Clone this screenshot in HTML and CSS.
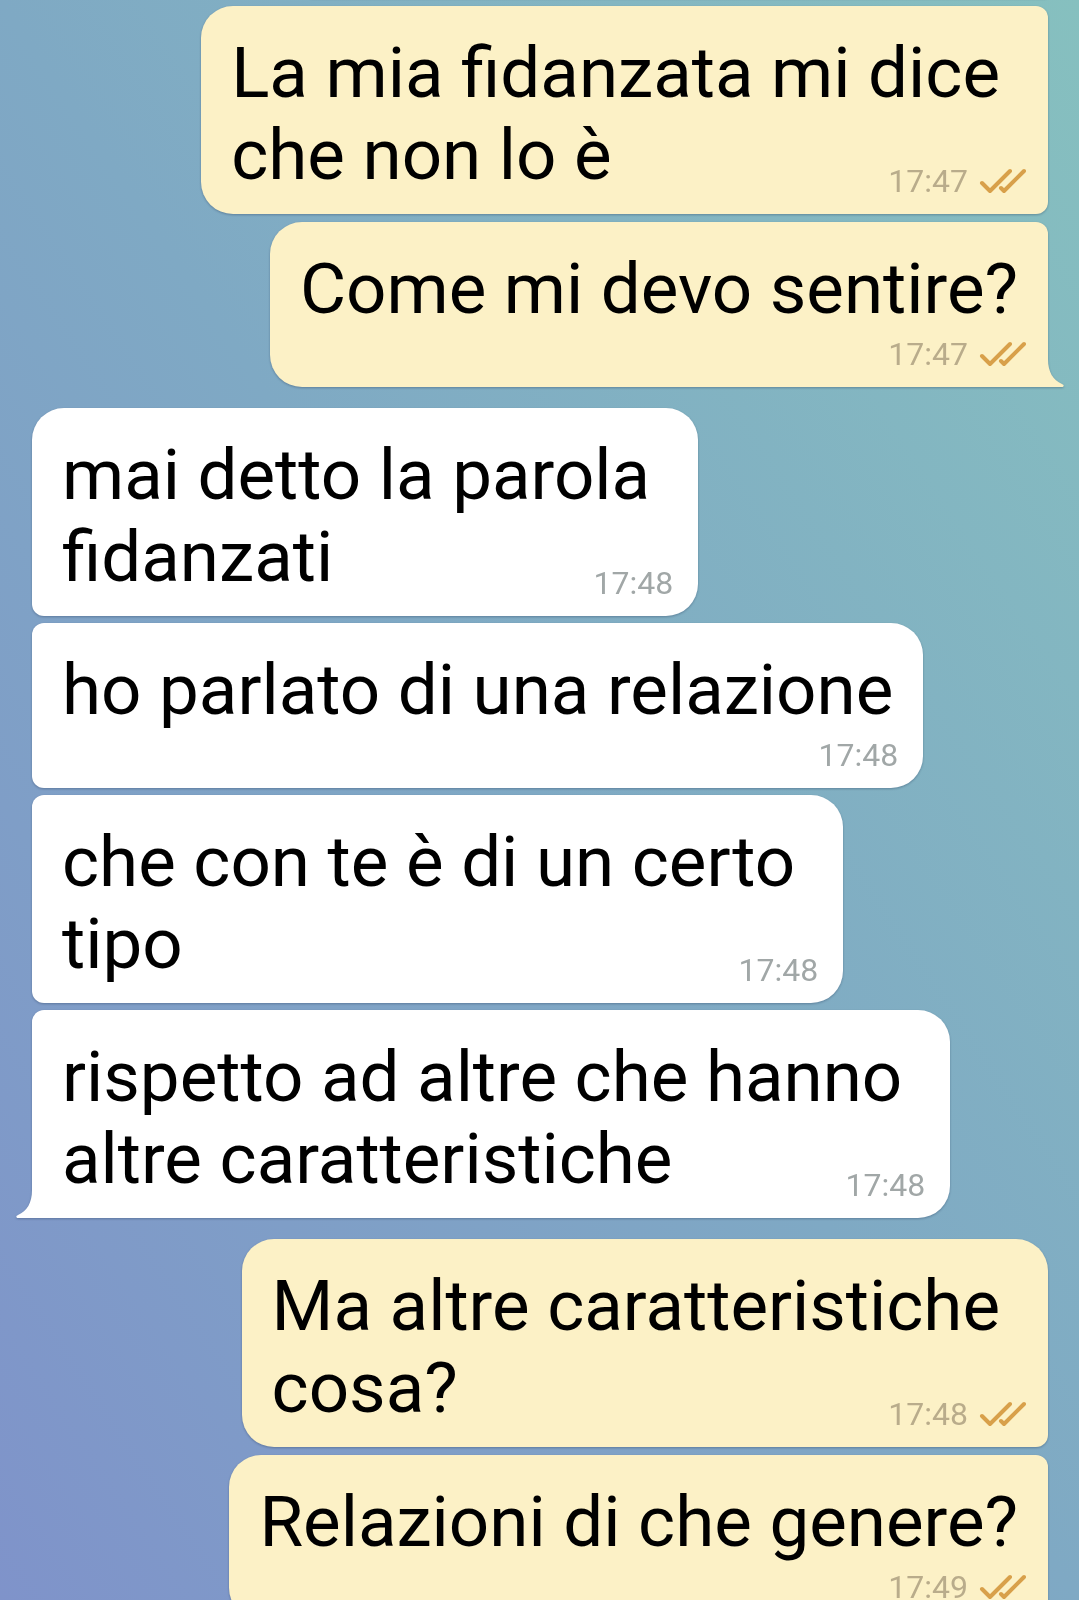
FILE: index.html
```html
<!DOCTYPE html>
<html lang="it">
<head>
    <meta charset="UTF-8">
    <meta name="viewport" content="width=device-width, initial-scale=1.0">
    <title>Chat</title>
    <link rel="stylesheet" href="styles.css">
</head>
<body>
    <div class="chat">
        <!-- messaggio precedente, fuori schermo -->
        <div class="msg out mid prev"></div>

        <div class="msg out mid wrap">
            <div class="line">La mia fidanzata mi dice</div>
            <div class="line last">
                <span>che non lo è</span>
                <span class="meta">
                    <span class="time">17:47</span>
                    <svg class="check" viewBox="0 0 48 28"><path d="M4 16 L12 24 L32 4 M23 21 L26 24 L46 4"/></svg>
                </span>
            </div>
        </div>

        <div class="msg out end">
            <div class="line">Come mi devo sentire?</div>
            <div class="meta-row">
                <span class="meta">
                    <span class="time">17:47</span>
                    <svg class="check" viewBox="0 0 48 28"><path d="M4 16 L12 24 L32 4 M23 21 L26 24 L46 4"/></svg>
                </span>
            </div>
            <svg class="tail" viewBox="0 0 17 28"><path d="M0 0 L1 0 C1 13 6 21 15 25 C17.5 26 17 28 15 28 L0 28 Z"/></svg>
        </div>

        <div class="msg in top wrap group">
            <div class="line">mai detto la parola</div>
            <div class="line last">
                <span>fidanzati</span>
                <span class="meta"><span class="time">17:48</span></span>
            </div>
        </div>

        <div class="msg in mid">
            <div class="line">ho parlato di una relazione</div>
            <div class="meta-row">
                <span class="meta"><span class="time">17:48</span></span>
            </div>
        </div>

        <div class="msg in mid wrap">
            <div class="line">che con te è di un certo</div>
            <div class="line last">
                <span>tipo</span>
                <span class="meta"><span class="time">17:48</span></span>
            </div>
        </div>

        <div class="msg in end wrap">
            <div class="line">rispetto ad altre che hanno</div>
            <div class="line last">
                <span>altre caratteristiche</span>
                <span class="meta"><span class="time">17:48</span></span>
            </div>
            <svg class="tail" viewBox="0 0 17 28"><path d="M0 0 L1 0 C1 13 6 21 15 25 C17.5 26 17 28 15 28 L0 28 Z"/></svg>
        </div>

        <div class="msg out top wrap group">
            <div class="line">Ma altre caratteristiche</div>
            <div class="line last">
                <span>cosa?</span>
                <span class="meta">
                    <span class="time">17:48</span>
                    <svg class="check" viewBox="0 0 48 28"><path d="M4 16 L12 24 L32 4 M23 21 L26 24 L46 4"/></svg>
                </span>
            </div>
        </div>

        <div class="msg out mid">
            <div class="line">Relazioni di che genere?</div>
            <div class="meta-row">
                <span class="meta">
                    <span class="time">17:49</span>
                    <svg class="check" viewBox="0 0 48 28"><path d="M4 16 L12 24 L32 4 M23 21 L26 24 L46 4"/></svg>
                </span>
            </div>
        </div>
    </div>
</body>
</html>
```

FILE: styles.css
```css
:root {
    --out-bg: #fcf1c6;
    --in-bg: #ffffff;
    --check: #d8a04a;
    --time-out: #b9ac8b;
    --time-in: #a1a7a7;
}

* {
    box-sizing: border-box;
    margin: 0;
    padding: 0;
}

body {
    width: 1079px;
    height: 1600px;
    overflow: hidden;
    font-family: 'Roboto', sans-serif;
    color: #000;
    background: linear-gradient(to bottom left, #86c0bf 0%, #7fa9c4 50%, #7f93ca 100%);
}

.chat {
    display: flex;
    flex-direction: column;
    padding: 0 31px 0 32px;
}

.msg {
    position: relative;
    margin-top: 8px;
    padding: 26px 30px 18px 30px;
    border-radius: 32px;
    font-size: 70.9px;
    line-height: 82px;
    filter: drop-shadow(0 1px 1px rgba(30, 50, 80, 0.35));
}

.msg.in {
    margin-top: 7px;
}

.msg.group {
    margin-top: 21px;
}

.msg.wrap {
    padding-right: 48px;
}

.msg.out {
    align-self: flex-end;
    background: var(--out-bg);
}

.msg.in {
    align-self: flex-start;
    background: var(--in-bg);
}

/* angoli dei messaggi raggruppati */
.out.top { border-bottom-right-radius: 12px; }
.out.mid { border-top-right-radius: 12px; border-bottom-right-radius: 12px; }
.out.end { border-top-right-radius: 12px; border-bottom-right-radius: 0; }
.in.top { border-bottom-left-radius: 12px; }
.in.mid { border-top-left-radius: 12px; border-bottom-left-radius: 12px; }
.in.end { border-top-left-radius: 12px; border-bottom-left-radius: 0; }

.msg.prev {
    width: 745px;
    height: 20px;
    margin-top: -22px;
    padding: 0;
}

.line {
    white-space: nowrap;
}

.line.last {
    display: flex;
    align-items: flex-end;
}

.meta {
    display: inline-flex;
    align-items: baseline;
    margin-left: auto;
    padding-left: 24px;
    font-size: 32px;
    line-height: 36px;
    margin-bottom: -3px;
}

.meta-row {
    display: flex;
    justify-content: flex-end;
    margin-top: 6px;
}

.out .meta { color: var(--time-out); }
.in .meta { color: var(--time-in); }

.wrap.out .meta { margin-right: -26px; }
.wrap.in .meta { margin-right: -23px; }
.out .meta-row .meta { margin-right: -8px; }
.in .meta-row .meta { margin-right: -5px; }

.check {
    width: 48px;
    height: 28px;
    margin-left: 10px;
    align-self: flex-end;
    margin-bottom: 4px;
    fill: none;
    stroke: var(--check);
    stroke-width: 4;
    stroke-linecap: round;
    stroke-linejoin: round;
}

.tail {
    position: absolute;
    bottom: 0;
    width: 17px;
    height: 28px;
}

.out .tail {
    right: -16px;
    fill: var(--out-bg);
}

.in .tail {
    left: -16px;
    fill: var(--in-bg);
    transform: scaleX(-1);
}
```
